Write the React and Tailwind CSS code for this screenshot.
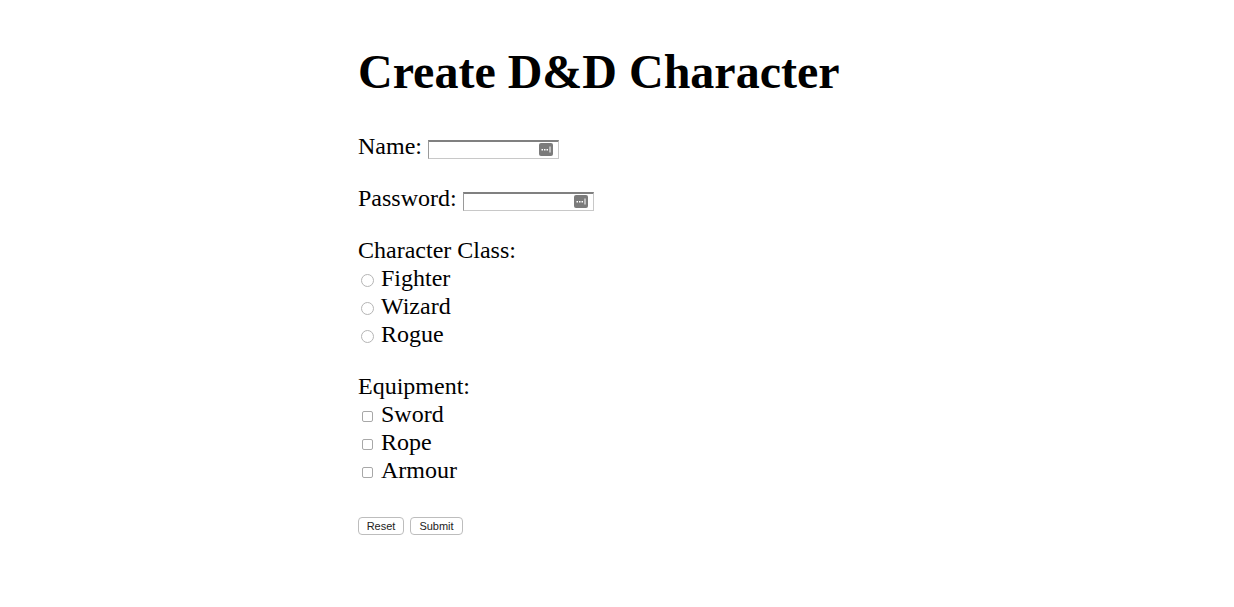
import React from "react";

function KeyIcon() {
  return (
    <span className="absolute right-[5px] top-[1px] flex h-[13px] w-[14px] items-center justify-center rounded-[2px] bg-[#7b7b7b]">
      <svg width="12" height="9" viewBox="0 0 12 9">
        <rect x="1.5" y="4" width="1.5" height="1.5" fill="#fff" />
        <rect x="4" y="4" width="1.5" height="1.5" fill="#fff" />
        <rect x="6.5" y="4" width="1.5" height="1.5" fill="#fff" />
        <rect x="9.5" y="1.5" width="1" height="6" fill="#fff" />
      </svg>
    </span>
  );
}

function FakeInput() {
  return (
    <span className="relative ml-[6px] mt-[6px] inline-block h-[19px] w-[131px] border border-t-2 border-[#c8c8c8] border-t-[#808080] border-l-[#9a9a9a] bg-white">
      <KeyIcon />
    </span>
  );
}

function Radio({ label }) {
  return (
    <div className="flex h-[28px] items-center">
      <span className="ml-[3px] mr-[7px] mt-[5px] inline-block h-[13px] w-[13px] rounded-full border border-[#b5b5b5] bg-white" />
      <span>{label}</span>
    </div>
  );
}

function Check({ label }) {
  return (
    <div className="flex h-[28px] items-center">
      <span className="ml-[4px] mr-[8px] mt-[5px] inline-block h-[11px] w-[11px] rounded-[2px] border border-[#a8a8a8] bg-white" />
      <span>{label}</span>
    </div>
  );
}

export default function App() {
  return (
    <div className="min-h-[607px] bg-white text-black" style={{ fontFamily: '"Liberation Serif", "Times New Roman", serif' }}>
      <div className="mx-auto w-[518px] pt-[44px]">
        <h1 className="m-0 text-[48px] font-bold leading-[55px]">Create D&amp;D Character</h1>
        <div className="mt-[33px] flex h-[28px] items-center text-[24px] leading-[28px]">
          <span>Name:</span>
          <FakeInput />
        </div>
        <div className="mt-[24px] flex h-[28px] items-center text-[24px] leading-[28px]">
          <span>Password:</span>
          <FakeInput />
        </div>
        <div className="mt-[24px] text-[24px] leading-[28px]">
          <div>Character Class:</div>
          <Radio label="Fighter" />
          <Radio label="Wizard" />
          <Radio label="Rogue" />
        </div>
        <div className="mt-[24px] text-[24px] leading-[28px]">
          <div>Equipment:</div>
          <Check label="Sword" />
          <Check label="Rope" />
          <Check label="Armour" />
        </div>
        <div className="mt-[33px] flex gap-[6px]" style={{ fontFamily: '"Liberation Sans", Arial, sans-serif' }}>
          <button className="h-[18px] w-[46px] rounded-[4px] border border-[#bdbdbd] bg-white text-[11px] leading-[16px] text-[#222]">Reset</button>
          <button className="h-[18px] w-[53px] rounded-[4px] border border-[#bdbdbd] bg-white text-[11px] leading-[16px] text-[#222]">Submit</button>
        </div>
      </div>
    </div>
  );
}
